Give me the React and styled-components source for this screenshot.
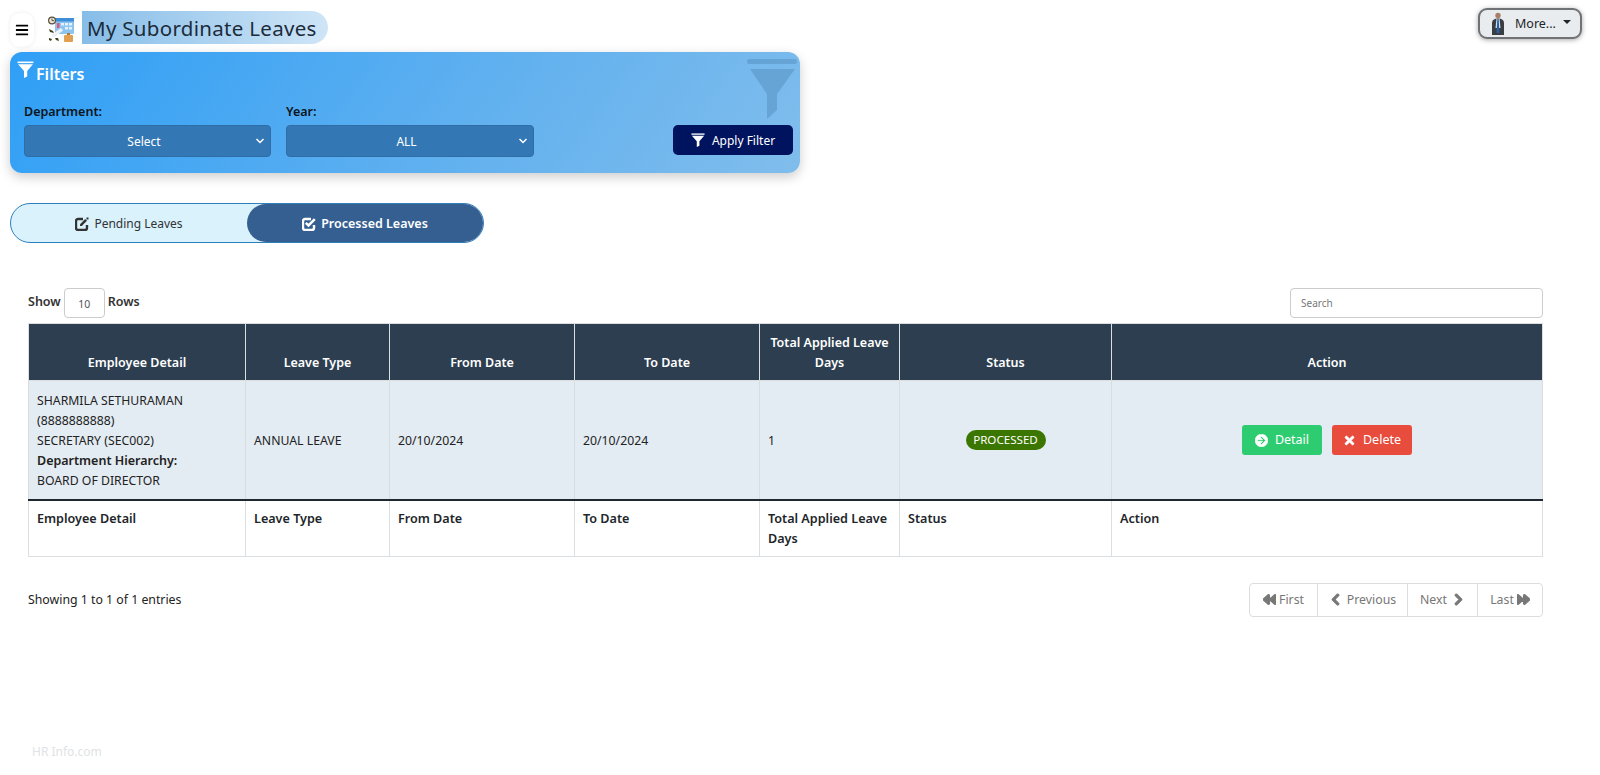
import React from 'react'
import styled, { createGlobalStyle } from 'styled-components'
import {
  FaArrowCircleRight,
  FaBackward,
  FaBars,
  FaChevronLeft,
  FaChevronRight,
  FaForward,
  FaTimes,
} from 'react-icons/fa'

const GlobalStyle = createGlobalStyle`
  html, body { margin: 0; padding: 0; background: #fff; }
  body {
    font-family: "Noto Sans", "Open Sans", "Liberation Sans", sans-serif;
    font-size: 12px;
    color: #212529;
  }
  * { box-sizing: border-box; }
`

const Page = styled.div`
  width: 1600px;
  height: 775px;
  padding: 8px 18px 0 10px;
  overflow: hidden;
`
const TopBar = styled.div`
  display: flex;
  justify-content: space-between;
  align-items: flex-start;
  height: 44px;
`
const TitleGroup = styled.div`
  display: flex;
  align-items: flex-start;
`
const MenuButton = styled.button`
  width: 24px;
  height: 34px;
  margin-top: 5px;
  padding: 0;
  border: none;
  border-radius: 10px;
  background: #fff;
  box-shadow: 0 0 4px rgba(0, 0, 0, 0.08);
  color: #000;
  display: flex;
  align-items: center;
  justify-content: center;
  font-size: 14px;
`
const Logo = styled.svg`
  width: 26px;
  height: 26px;
  margin: 8px 8px 0 14px;
`
const PageTitle = styled.h1`
  margin: 3px 0 0;
  height: 33px;
  width: 246px;
  padding-left: 5px;
  border-radius: 0 17px 17px 0;
  background: linear-gradient(90deg, #86bde8, #cfe5f7);
  color: #1c2b3a;
  font-size: 20.5px;
  line-height: 34px;
  font-weight: 400;
  white-space: nowrap;
  letter-spacing: 0.3px;
`
const MoreButton = styled.button`
  width: 104px;
  height: 31px;
  margin: 0;
  padding: 0 0 0 11px;
  border: 2px solid #6f7375;
  border-radius: 9px;
  background: #e9ecef;
  box-shadow: 0 1px 5px rgba(0, 0, 0, 0.35);
  color: #212529;
  font: inherit;
  font-size: 12.5px;
  display: flex;
  align-items: center;
`
const Avatar = styled.svg`
  width: 14px;
  height: 23px;
  margin-right: 10px;
`
const Caret = styled.span`
  margin-left: 7px;
  margin-bottom: 4px;
  border-top: 4px solid #212529;
  border-left: 4px solid transparent;
  border-right: 4px solid transparent;
`
const FilterCard = styled.section`
  position: relative;
  width: 790px;
  height: 121px;
  border-radius: 12px;
  background: linear-gradient(125deg, #2f9ff6 0%, #62b1ef 60%, #80bdec 100%);
  box-shadow: 0 4px 12px rgba(0, 0, 0, 0.2);
  padding: 9px 7px 0 7px;
`
const FilterHeading = styled.div`
  display: flex;
  align-items: flex-start;
  gap: 2px;
  height: 30px;
  color: #fff;
  font-size: 16px;
  font-weight: 600;
  line-height: 26px;
`
const FilterIcon = styled.svg`
  width: ${(props) => props.size}px;
  height: ${(props) => props.size}px;
  flex: none;
`
const Watermark = styled.svg`
  position: absolute;
  top: 7px;
  right: 3px;
  width: 50px;
  height: 60px;
`
const FilterRow = styled.div`
  display: flex;
  align-items: flex-end;
  padding-left: 7px;
  margin-top: 12px;
`
const Field = styled.div`
  width: ${(props) => props.w}px;
  margin-right: ${(props) => props.gap}px;
`
const FieldLabel = styled.label`
  display: block;
  height: 22px;
  color: #0c1520;
  font-size: 12.5px;
  font-weight: 600;
  line-height: 17px;
`
const SelectBox = styled.div`
  position: relative;
  height: 32px;
  border: 1px solid #2f6da6;
  border-radius: 4px;
  background: #3377b4;
  color: #fff;
  font-size: 12px;
  line-height: 31px;
  text-align: center;
  padding-right: 7px;
`
const SelectArrow = styled.svg`
  position: absolute;
  right: 5px;
  top: 11px;
  width: 10px;
  height: 8px;
`
const ApplyButton = styled.button`
  width: 120px;
  height: 30px;
  margin: 0 0 2px auto;
  border: none;
  border-radius: 5px;
  background: #00135f;
  color: #fff;
  font: inherit;
  font-size: 12px;
  display: flex;
  align-items: center;
  justify-content: center;
  gap: 7px;
`
const Tabs = styled.div`
  display: flex;
  width: 474px;
  height: 40px;
  margin-top: 30px;
  border: 1px solid #2f7fbd;
  border-radius: 20px;
  background: #d9f2fc;
`
const Tab = styled.div`
  flex: 1;
  display: flex;
  align-items: center;
  justify-content: center;
  gap: 5px;
  padding-top: 1px;
  border-radius: 20px;
  font-size: ${(props) => (props.active ? '12.5px' : '12px')};
  font-weight: ${(props) => (props.active ? 600 : 400)};
  color: ${(props) => (props.active ? '#fff' : '#333')};
  background: ${(props) => (props.active ? '#365f91' : 'transparent')};
`
const TabIcon = styled.svg`
  width: 14px;
  height: 14px;
  flex: none;
`
const TableArea = styled.div`
  width: 1515px;
  margin: 45px 0 0 18px;
`
const TableTools = styled.div`
  display: flex;
  justify-content: space-between;
  align-items: center;
  height: 30px;
  margin-bottom: 5px;
`
const RowsControl = styled.div`
  display: flex;
  align-items: flex-start;
  gap: 3px;
  height: 30px;
  font-size: 12.5px;
  font-weight: 600;
  line-height: 28px;
  color: #333;
`
const RowsInput = styled.div`
  width: 41px;
  height: 30px;
  border: 1px solid #ccc;
  border-radius: 4px;
  font-size: 10.5px;
  font-weight: 400;
  color: #555;
  text-align: center;
  line-height: 31px;
`
const SearchInput = styled.div`
  width: 253px;
  height: 30px;
  padding-left: 10px;
  border: 1px solid #ccc;
  border-radius: 4px;
  color: #777;
  font-size: 10px;
  line-height: 29px;
`
const Table = styled.table`
  width: 1514px;
  table-layout: fixed;
  border-collapse: collapse;
  border: 1px solid #dcdfe1;
`
const HeadCell = styled.th`
  height: 57px;
  padding: 0 8px 7px;
  border: 1px solid #dcdfe1;
  border-top: none;
  background: #2c3e50;
  color: #fff;
  font-size: 12.5px;
  font-weight: 600;
  line-height: 20px;
  text-align: center;
  vertical-align: bottom;
`
const BodyCell = styled.td`
  height: 118px;
  padding: ${(props) => (props.center ? '9px 8px' : '10px 8px 8px')};
  border: 1px solid #d8dde0;
  border-bottom: 2px solid #1f2830;
  background: #e4ecf3;
  color: #222;
  font-size: 12.25px;
  line-height: 20px;
  text-align: ${(props) => (props.center ? 'center' : 'left')};
  vertical-align: middle;
`
const FootCell = styled.th`
  height: 56px;
  padding: 8px 8px 0;
  border: 1px solid #dcdfe1;
  color: #212529;
  font-size: 12.6px;
  font-weight: 600;
  line-height: 20px;
  text-align: left;
  vertical-align: top;
`
const Strong = styled.strong`
  font-weight: 600;
  font-size: 12.5px;
`
const StatusPill = styled.span`
  display: inline-block;
  height: 20px;
  width: 80px;
  border-radius: 10px;
  background: #3b7600;
  color: #fff;
  font-size: 11.6px;
  line-height: 20px;
  text-align: center;
`
const ActionGroup = styled.div`
  display: flex;
  justify-content: center;
  gap: 10px;
`
const ActionButton = styled.button`
  width: 80px;
  height: 30px;
  padding: 0;
  border: none;
  border-radius: 3px;
  background: ${(props) => props.bg};
  color: #fff;
  font: inherit;
  font-size: 12.5px;
  display: flex;
  align-items: center;
  justify-content: center;
  gap: 7px;
  svg {
    font-size: 13px;
    stroke: currentColor;
    stroke-width: 25px;
  }
`
const TableFooter = styled.div`
  display: flex;
  justify-content: space-between;
  align-items: center;
  margin-top: 26px;
  height: 34px;
`
const EntryCount = styled.div`
  font-size: 12.3px;
  color: #222;
`
const Pager = styled.div`
  display: flex;
  height: 34px;
  border: 1px solid #ddd;
  border-radius: 4px;
`
const PagerItem = styled.div`
  width: ${(props) => props.w}px;
  display: flex;
  align-items: center;
  justify-content: center;
  gap: ${(props) => props.gap || 3}px;
  color: #777;
  font-size: 12.3px;
  border-left: ${(props) => (props.first ? 'none' : '1px solid #ddd')};
  svg {
    font-size: 13px;
    stroke: currentColor;
    stroke-width: 45px;
  }
`
const Credit = styled.div`
  margin: 126px 0 0 22px;
  color: #e0e3e5;
  font-size: 12px;
`

const columns = [217, 144, 185, 185, 140, 212, 431]
const labels = ['Employee Detail', 'Leave Type', 'From Date', 'To Date', 'Total Applied Leave Days', 'Status', 'Action']

const Funnel = ({ size, color = '#fff' }) => (
  <FilterIcon size={size} viewBox="0 0 16 16" fill={color}>
    <rect x="0.5" y="0.5" width="15" height="1.5" />
    <path d="M1 3h14L9.6 9.5V14.5L6.6 16V9.5z" />
  </FilterIcon>
)

const EditIcon = () => (
  <TabIcon viewBox="0 0 14 14">
    <path d="M12 8v3a2 2 0 0 1-2 2H3a2 2 0 0 1-2-2V4a2 2 0 0 1 2-2h5" fill="none" stroke="currentColor" strokeWidth="2.400" />
    <path d="M5 7.200L10.200 2l1.800 1.800L6.800 9H5z" fill="currentColor" />
    <rect x="11.500" y="0.500" width="2" height="2" fill="currentColor" />
  </TabIcon>
)

const CheckIcon = () => (
  <TabIcon viewBox="0 0 14 14">
    <path d="M12 8v3a2 2 0 0 1-2 2H3a2 2 0 0 1-2-2V4a2 2 0 0 1 2-2h6" fill="none" stroke="currentColor" strokeWidth="2.400" />
    <path d="M3.800 5.800l2.700 2.700L12.800 2.200" fill="none" stroke="currentColor" strokeWidth="2.500" />
  </TabIcon>
)

const CalendarLogo = () => (
  <Logo viewBox="0 0 26 26">
    <rect x="7" y="2" width="19" height="16" rx="1.500" fill="#8cc4f0" />
    <rect x="7" y="2" width="19" height="3.500" fill="#3f8fd8" />
    <g fill="#e2f0fb">
      <rect x="13" y="7" width="3" height="2.500" />
      <rect x="17" y="7" width="3" height="2.500" />
      <rect x="21" y="7" width="3" height="2.500" />
      <rect x="17" y="11" width="3" height="2.500" />
      <rect x="21" y="11" width="3" height="2.500" />
    </g>
    <rect x="9" y="7" width="2.500" height="5" fill="#e2557a" />
    <circle cx="4" cy="4.500" r="3.400" fill="#efe9d8" stroke="#5b5140" strokeWidth="1.200" />
    <path d="M4 2.500v2.200h2" stroke="#5b5140" fill="none" />
    <path d="M3 19l10-7 2 2.500-9 7z" fill="#eef1f4" />
    <path d="M1 13l4 2 1 2-4-1zM7 22l3 0 1 3-3-1zM1 22l3 1-1 2-2-1z" fill="#40401f" />
    <rect x="16" y="19" width="9" height="7" rx="1" fill="#e0a050" />
    <rect x="19" y="17" width="3" height="2" fill="#b07830" />
  </Logo>
)

const PersonAvatar = () => (
  <Avatar viewBox="0 0 14 23">
    <circle cx="7" cy="3.500" r="2.700" fill="#a87f66" />
    <path d="M1 23V11c0-3 2-4.500 6-4.500S13 8 13 11v12z" fill="#3a3e42" />
    <path d="M5.500 7h3l1 9h-5z" fill="#dfe6ee" />
    <path d="M6.300 7h1.400l.8 14H5.500z" fill="#2560a8" />
  </Avatar>
)

const App = () => {
  return (
    <Page>
      <GlobalStyle />
      <TopBar>
        <TitleGroup>
          <MenuButton><FaBars /></MenuButton>
          <CalendarLogo />
          <PageTitle>My Subordinate Leaves</PageTitle>
        </TitleGroup>
        <MoreButton>
          <PersonAvatar />
          More...
          <Caret />
        </MoreButton>
      </TopBar>

      <FilterCard>
        <Watermark viewBox="0 0 50 60" fill="#3c6f9e" fillOpacity="0.3">
          <rect x="0" y="0" width="50" height="5" rx="2.500" />
          <path d="M3 10h45L30 35v16l-10 9V35z" />
        </Watermark>
        <FilterHeading>
          <Funnel size={17} />
          Filters
        </FilterHeading>
        <FilterRow>
          <Field w={247} gap={15}>
            <FieldLabel>Department:</FieldLabel>
            <SelectBox>
              Select
              <SelectArrow viewBox="0 0 10 8" fill="none" stroke="#fff" strokeWidth="1.500">
                <path d="M1.500 2l3.500 3.500L8.500 2" />
              </SelectArrow>
            </SelectBox>
          </Field>
          <Field w={248} gap={14}>
            <FieldLabel>Year:</FieldLabel>
            <SelectBox>
              ALL
              <SelectArrow viewBox="0 0 10 8" fill="none" stroke="#fff" strokeWidth="1.500">
                <path d="M1.500 2l3.500 3.500L8.500 2" />
              </SelectArrow>
            </SelectBox>
          </Field>
          <ApplyButton>
            <Funnel size={14} />
            Apply Filter
          </ApplyButton>
        </FilterRow>
      </FilterCard>

      <Tabs>
        <Tab><EditIcon />Pending Leaves</Tab>
        <Tab active><CheckIcon />Processed Leaves</Tab>
      </Tabs>

      <TableArea>
        <TableTools>
          <RowsControl>Show <RowsInput>10</RowsInput> Rows</RowsControl>
          <SearchInput>Search</SearchInput>
        </TableTools>
        <Table>
          <colgroup>
            {columns.map((w, i) => <col key={i} style={{ width: w }} />)}
          </colgroup>
          <thead>
            <tr>{labels.map((l) => <HeadCell key={l}>{l}</HeadCell>)}</tr>
          </thead>
          <tbody>
            <tr>
              <BodyCell>
                SHARMILA SETHURAMAN<br />
                (8888888888)<br />
                SECRETARY (SEC002)<br />
                <Strong>Department Hierarchy:</Strong><br />
                BOARD OF DIRECTOR
              </BodyCell>
              <BodyCell>ANNUAL LEAVE</BodyCell>
              <BodyCell>20/10/2024</BodyCell>
              <BodyCell>20/10/2024</BodyCell>
              <BodyCell>1</BodyCell>
              <BodyCell center><StatusPill>PROCESSED</StatusPill></BodyCell>
              <BodyCell center>
                <ActionGroup>
                  <ActionButton bg="#2ecc71"><FaArrowCircleRight />Detail</ActionButton>
                  <ActionButton bg="#e74c3c"><FaTimes />Delete</ActionButton>
                </ActionGroup>
              </BodyCell>
            </tr>
          </tbody>
          <tfoot>
            <tr>{labels.map((l) => <FootCell key={l}>{l}</FootCell>)}</tr>
          </tfoot>
        </Table>
        <TableFooter>
          <EntryCount>Showing 1 to 1 of 1 entries</EntryCount>
          <Pager>
            <PagerItem w={67} first><FaBackward />First</PagerItem>
            <PagerItem w={90} gap={5}><FaChevronLeft />Previous</PagerItem>
            <PagerItem w={70} gap={5}>Next<FaChevronRight /></PagerItem>
            <PagerItem w={65}>Last<FaForward /></PagerItem>
          </Pager>
        </TableFooter>
      </TableArea>
      <Credit>HR Info.com</Credit>
    </Page>
  )
}

export default App
